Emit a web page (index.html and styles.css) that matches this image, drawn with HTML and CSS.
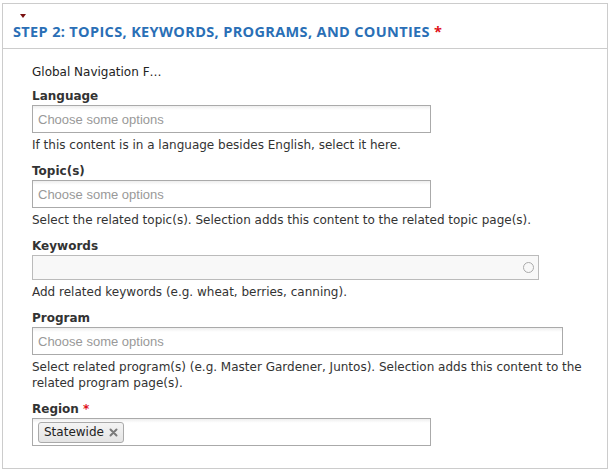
FILE: index.html
```html
<!DOCTYPE html>
<html>
<head>
<meta charset="utf-8">
<link rel="stylesheet" href="styles.css">
</head>
<body>
<div class="fieldset">
  <div class="legend">
    <span class="toggle"></span>
    <h2 class="title">STEP 2: TOPICS, KEYWORDS, PROGRAMS, AND COUNTIES <span class="req">*</span></h2>
  </div>
  <div class="content">
    <div class="plain">Global Navigation F…</div>

    <div class="item">
      <div class="label">Language</div>
      <div class="chosen w398"><span class="ph">Choose some options</span></div>
      <div class="desc">If this content is in a language besides English, select it here.</div>
    </div>

    <div class="item">
      <div class="label">Topic(s)</div>
      <div class="chosen w398"><span class="ph">Choose some options</span></div>
      <div class="desc">Select the related topic(s). Selection adds this content to the related topic page(s).</div>
    </div>

    <div class="item">
      <div class="label">Keywords</div>
      <div class="textfield"><span class="throbber"></span></div>
      <div class="desc">Add related keywords (e.g. wheat, berries, canning).</div>
    </div>

    <div class="item">
      <div class="label">Program</div>
      <div class="chosen w529"><span class="ph">Choose some options</span></div>
      <div class="desc">Select related program(s) (e.g. Master Gardener, Juntos). Selection adds this content to the related program page(s).</div>
    </div>

    <div class="item">
      <div class="label">Region <span class="req">*</span></div>
      <div class="chosen w398 tags"><span class="tag">Statewide <svg class="x" width="9" height="9" viewBox="0 0 9 9"><path d="M1.5 1.5 L7.5 7.5 M7.5 1.5 L1.5 7.5" stroke="#7a7a7a" stroke-width="2" stroke-linecap="round"/></svg></span></div>
    </div>
  </div>
</div>
</body>
</html>
```
FILE: styles.css
```css
* { box-sizing: border-box; }
html, body { margin: 0; padding: 0; background: #fff; }
body {
  font-family: "DejaVu Sans", Verdana, sans-serif;
  font-size: 12px;
  color: #333;
}
.fieldset {
  margin: 3px 4px 0 2px;
  height: 466px;
  border: 1px solid #cccccc;
}
.legend {
  height: 45px;
  border-bottom: 1px solid #cccccc;
  position: relative;
  padding: 0 0 0 10px;
}
.toggle {
  position: absolute;
  left: 17px;
  top: 10px;
  width: 0; height: 0;
  border-left: 3.5px solid transparent;
  border-right: 3.5px solid transparent;
  border-top: 4px solid #7a1010;
}
.title {
  margin: 0;
  padding-top: 19px;
  font-family: "Open Sans", sans-serif;
  font-weight: 700;
  font-size: 14.5px;
  letter-spacing: 0.35px;
  line-height: 18px;
  color: #2a6fb6;
}
.req { color: #e0101a; }
.content { padding: 15px 0 0 29px; }
.plain { line-height: 16px; margin-bottom: 8px; color: #222; }
.item { margin-bottom: 10px; }
.label { font-weight: 700; line-height: 16px; margin-bottom: 1px; color: #333; }
.desc { line-height: 16px; margin-top: 4px; color: #333; padding-right: 18px; }
.chosen {
  height: 28px;
  border: 1px solid #aaaaaa;
  background: linear-gradient(#eeeeee 0%, #ffffff 15%);
  display: flex;
  align-items: center;
  padding-left: 5px;
}
.w398 { width: 399px; }
.w529 { width: 531px; }
.ph { font-family: "Liberation Sans", Arial, sans-serif; font-size: 13px; color: #999; }
.textfield {
  width: 507px;
  height: 25px;
  border: 1px solid #bbbbbb;
  background: #f8f8f8;
  display: flex;
  align-items: center;
  justify-content: flex-end;
  padding-right: 4px;
}
.throbber {
  width: 11px; height: 11px;
  border: 1.5px solid #aaaaaa;
  border-radius: 50%;
}
.tags { padding-left: 5px; }
.tag {
  display: inline-flex;
  align-items: center;
  height: 21px;
  padding: 0 5px 0 5px;
  border: 1px solid #aaaaaa;
  border-radius: 3px;
  background: linear-gradient(#f4f4f4, #e4e4e4);
  color: #222;
  font-size: 12px;
}
.x { margin-left: 5px; }
```
